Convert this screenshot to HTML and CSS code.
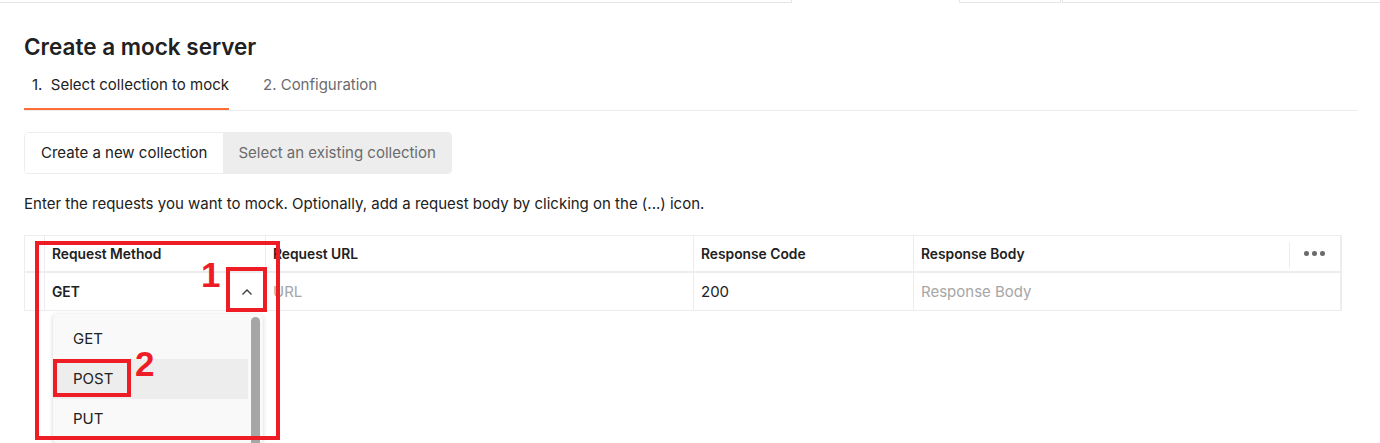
FILE: index.html
```html
<!DOCTYPE html>
<html lang="en">
<head>
<meta charset="utf-8">
<title>Create a mock server</title>
<link rel="stylesheet" href="styles.css">
</head>
<body>
<div class="topbar">
  <div class="tb tb-a"></div>
  <div class="tb tb-active"></div>
  <div class="tb tb-b"></div>
  <div class="tb tb-c"></div>
</div>
<main class="page">
  <h1 class="title">Create a mock server</h1>
  <nav class="steps">
    <div class="step step-active">1.&nbsp; Select collection to mock</div>
    <div class="step">2. Configuration</div>
  </nav>
  <div class="segmented">
    <div class="seg seg-on">Create a new collection</div>
    <div class="seg seg-off">Select an existing collection</div>
  </div>
  <p class="desc">Enter the requests you want to mock. Optionally, add a request body by clicking on the (...) icon.</p>
  <div class="table">
    <div class="row head">
      <div class="cell c-drag"></div>
      <div class="cell c-method">Request Method</div>
      <div class="cell c-url">Request URL</div>
      <div class="cell c-code">Response Code</div>
      <div class="cell c-body">Response Body</div>
      <div class="cell c-more"><span class="more-sep"></span><span class="dots"><i></i><i></i><i></i></span></div>
    </div>
    <div class="row data">
      <div class="cell c-drag"></div>
      <div class="cell c-method method-cell">
        <span class="bold">GET</span>
        <svg class="chev" width="12" height="8" viewBox="0 0 12 8"><path d="M1.5 6.5 L6 2 L10.5 6.5" fill="none" stroke="#3c3c3c" stroke-width="1.4"/></svg>
        <div class="dropdown">
          <div class="opt">GET</div>
          <div class="opt opt-hover">POST</div>
          <div class="opt">PUT</div>
          <div class="scrollbar"></div>
        </div>
      </div>
      <div class="cell c-url ph">URL</div>
      <div class="cell c-code">200</div>
      <div class="cell c-bodywide ph">Response Body</div>
    </div>
    <div class="anno anno-outer"></div>
    <div class="anno anno-1"></div>
    <div class="anno anno-2"></div>
    <div class="anno-num num-1">1</div>
    <div class="anno-num num-2">2</div>
  </div>
</main>
</body>
</html>
```
FILE: styles.css
```css
* { box-sizing: border-box; }
html, body {
  margin: 0;
  padding: 0;
  background: #ffffff;
  height: 443px;
  overflow: hidden;
}
body {
  font-family: Inter, "Noto Sans", "DejaVu Sans", sans-serif;
  color: #212121;
  font-size: 15px;
}
.topbar {
  display: flex;
  height: 3px;
}
.tb { height: 3px; }
.tb-a { width: 792px; border-bottom: 1px solid #e6e6e6; border-right: 1px solid #e6e6e6; }
.tb-active { width: 167px; }
.tb-b { width: 102px; border: 1px solid #e6e6e6; border-top: 0; }
.tb-c { flex: 1; border-bottom: 1px solid #e6e6e6; border-left: 1px solid #e6e6e6; margin-left: 1px; }

.page {
  padding: 0 22px 0 24px;
}
.title {
  margin: 30px 0 0;
  font-size: 22.5px;
  line-height: 28px;
  font-weight: 600;
  color: #212121;
}
.steps {
  display: flex;
  gap: 26px;
  border-bottom: 1px solid #ededed;
  margin-top: 1px;
}
.step {
  padding: 13px 0 13px 8px;
  line-height: 20px;
  border-bottom: 2px solid transparent;
  color: #6b6b6b;
}
.step-active {
  color: #212121;
  border-bottom-color: #ff6c37;
}
.segmented {
  display: inline-flex;
  margin-top: 21px;
  border: 1px solid #ededed;
  border-radius: 4px;
  height: 42px;
  overflow: hidden;
}
.seg {
  padding: 0 16px;
  line-height: 40px;
}
.seg-on { background: #ffffff; color: #212121; }
.seg-off { background: #ededed; color: #6b6b6b; padding: 0 15px 0 15px; }
.desc {
  margin: 20px 0 0;
  line-height: 20px;
}
.table {
  position: relative;
  margin-top: 21px;
  border: 1px solid #ededed;
  width: 1318px;
}
.row {
  display: grid;
  grid-template-columns: 20px 221px 428px 220px 1fr 52px;
}
.row.head {
  height: 37px;
  border-bottom: 2px solid #ededed;
}
.row.data {
  height: 37px;
  grid-template-columns: 20px 221px 428px 220px 1fr;
}
.cell {
  border-right: 1px solid #ededed;
  padding: 0 7px;
  display: flex;
  align-items: center;
  white-space: nowrap;
}
.head .cell {
  font-size: 13.8px;
  font-weight: 600;
}
.c-drag { padding: 0; }
.c-body { border-right: 0; }
.c-more { border-right: 1px solid #ededed; padding: 0; position: relative; justify-content: center; }
.c-bodywide { border-right: 1px solid #ededed; }
.more-sep {
  position: absolute;
  left: 0;
  top: 6px;
  bottom: 3px;
  width: 1px;
  background: #ededed;
}
.dots { display: flex; gap: 3.5px; margin-left: 0; }
.dots i {
  display: block;
  width: 4.5px;
  height: 4.5px;
  border-radius: 50%;
  background: #6b6b6b;
}
.bold { font-weight: 600; font-size: 13.8px; }
.ph { color: #a6a6a6; }
.method-cell {
  position: relative;
  justify-content: space-between;
}
.chev { margin-right: 5px; }
.dropdown {
  position: absolute;
  left: 8px;
  top: 41px;
  width: 210px;
  height: 129px;
  background: #f9f9f9;
  border-radius: 4px;
  box-shadow: 0 1px 4px rgba(0,0,0,0.18);
  padding: 5px 15px 0 0;
  overflow: hidden;
  z-index: 2;
}
.opt {
  height: 40px;
  line-height: 40px;
  padding-left: 20px;
  color: #212121;
  font-size: 15px;
}
.opt-hover { background: #ededed; }
.scrollbar {
  position: absolute;
  right: 3px;
  top: 3px;
  width: 9px;
  height: 200px;
  border-radius: 5px;
  background: #a6a6a6;
}
.anno {
  position: absolute;
  border: 4px solid #ee1c25;
  z-index: 5;
}
.anno-outer { left: 10px; top: 5px; width: 245px; height: 199px; }
.anno-1 { left: 201px; top: 31px; width: 41px; height: 45px; }
.anno-2 { left: 28px; top: 123px; width: 78px; height: 38px; }
.anno-num {
  position: absolute;
  z-index: 5;
  color: #ee1c25;
  font-family: "Liberation Sans", Arial, sans-serif;
  font-weight: 700;
  font-size: 35px;
  line-height: 35px;
}
.num-1 { left: 176px; top: 21px; }
.num-2 { left: 110px; top: 110px; }
```
